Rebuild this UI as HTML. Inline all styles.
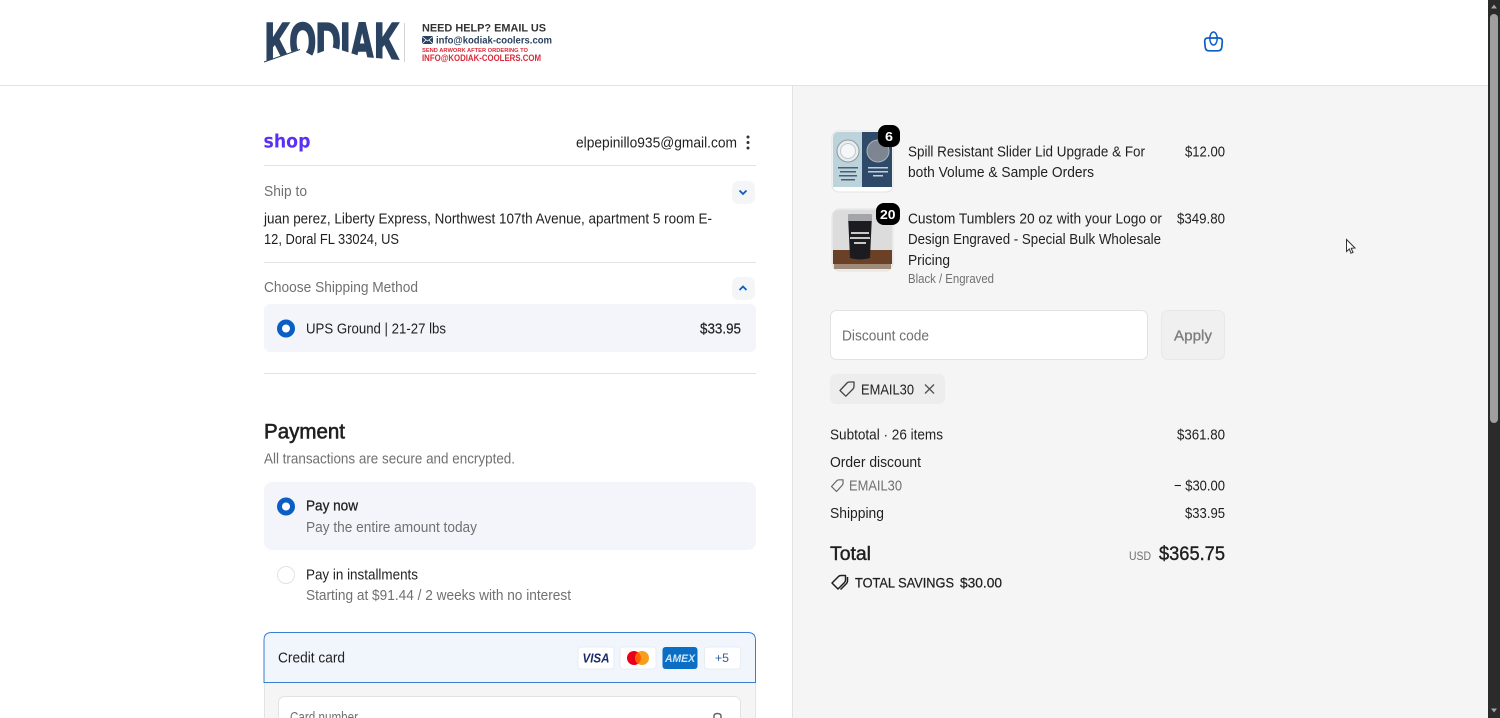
<!DOCTYPE html>
<html lang="en"><head><meta charset="utf-8"><title>Checkout</title>
<style>
html,body{margin:0;padding:0;width:1500px;height:718px;overflow:hidden;background:#fff}
svg{display:block}
text{font-family:"Liberation Sans",sans-serif;font-size:15px;fill:#1f1f1f}
.g{fill:#707070}
.b{font-weight:bold}
</style></head><body>
<svg width="1500" height="718" viewBox="0 0 1500 718" xmlns="http://www.w3.org/2000/svg">
<rect x="793" y="85" width="695" height="633" fill="#f5f5f5"/>
<rect x="0" y="85" width="1488" height="1" fill="#e3e3e3"/>
<rect x="792" y="85" width="1" height="633" fill="#e3e3e3"/>

<!-- logo -->
<text x="265" y="60" class="b" textLength="134" lengthAdjust="spacingAndGlyphs" style="font-size:53px;fill:#2b4361;stroke:#2b4361;stroke-width:2.500px">KODIAK</text>
<path d="M264 61.700 L300 49 L312 55.500 L333 47.500 L363 57 L400 60 L402 66 L262 66Z" fill="#fff"/>
<path d="M264 62 L300 49.500" stroke="#2b4361" stroke-width="1" fill="none"/>
<rect x="404" y="23" width="1" height="39" fill="#d5d5d5"/>
<text x="422" y="31.500" class="b" textLength="124" lengthAdjust="spacingAndGlyphs" style="font-size:11px;fill:#333">NEED HELP? EMAIL US</text>
<rect x="422" y="36" width="11" height="8" fill="#2b4361"/>
<path d="M422 36.500 L427.500 41 L433 36.500M422 44 L426 40M433 44 L429 40" stroke="#fff" stroke-width=".8" fill="none"/>
<text x="436" y="43.500" class="b" textLength="116" lengthAdjust="spacingAndGlyphs" style="font-size:10px;fill:#2b4361">info@kodiak-coolers.com</text>
<text x="422" y="52" class="b" textLength="106" lengthAdjust="spacingAndGlyphs" style="font-size:5.500px;fill:#d9293a">SEND ARWORK AFTER ORDERING TO</text>
<text x="422" y="61" class="b" textLength="119" lengthAdjust="spacingAndGlyphs" style="font-size:9px;fill:#d9293a">INFO@KODIAK-COOLERS.COM</text>

<!-- bag -->
<path d="M1208 38 H1219 Q1222.500 38 1222.300 41.500 L1221.800 47 Q1221.500 50.800 1218 50.800 H1209 Q1205.500 50.800 1205.200 47 L1204.700 41.500 Q1204.500 38 1208 38Z" fill="none" stroke="#0b5fc4" stroke-width="1.700"/>
<ellipse cx="1213.500" cy="38.500" rx="3.700" ry="6.500" fill="none" stroke="#0b5fc4" stroke-width="1.500"/>

<!-- shop -->
<text x="263.500" y="147.500" class="b" textLength="47" lengthAdjust="spacingAndGlyphs" style="font-family:'DejaVu Sans',sans-serif;font-size:19px;fill:#5a31f4">shop</text>
<text x="576" y="147.500" textLength="161" lengthAdjust="spacingAndGlyphs">elpepinillo935@gmail.com</text>
<circle cx="748" cy="137" r="1.500" fill="#333"/><circle cx="748" cy="142.500" r="1.500" fill="#333"/><circle cx="748" cy="148" r="1.500" fill="#333"/>
<rect x="264" y="165" width="492" height="1" fill="#e3e3e3"/>

<text x="264" y="196" class="g" textLength="43" lengthAdjust="spacingAndGlyphs">Ship to</text>
<rect x="732" y="181" width="23" height="23" rx="7" fill="#f3f5f7"/>
<path d="M739.500 190.500 L743 194 L746.500 190.500" fill="none" stroke="#0b5fc4" stroke-width="1.800"/>
<text x="264" y="223.500" textLength="448" lengthAdjust="spacingAndGlyphs">juan perez, Liberty Express, Northwest 107th Avenue, apartment 5 room E-</text>
<text x="264" y="244" textLength="135" lengthAdjust="spacingAndGlyphs">12, Doral FL 33024, US</text>
<rect x="264" y="262" width="492" height="1" fill="#e3e3e3"/>

<text x="264" y="292" class="g" textLength="154" lengthAdjust="spacingAndGlyphs">Choose Shipping Method</text>
<rect x="732" y="277" width="23" height="23" rx="7" fill="#f3f5f7"/>
<path d="M739.500 290 L743 286.500 L746.500 290" fill="none" stroke="#0b5fc4" stroke-width="1.800"/>
<rect x="264" y="304" width="492" height="48" rx="6" fill="#f4f5fb"/>
<circle cx="286" cy="328.500" r="6.500" fill="#fff" stroke="#0b5fc4" stroke-width="5"/>
<text x="306" y="333.500" textLength="140" lengthAdjust="spacingAndGlyphs">UPS Ground | 21-27 lbs</text>
<text x="700" y="333.500" textLength="41" lengthAdjust="spacingAndGlyphs" style="stroke:#1f1f1f;stroke-width:.2px">$33.95</text>
<rect x="264" y="373" width="492" height="1" fill="#e3e3e3"/>

<text x="264" y="438.500" textLength="81" lengthAdjust="spacingAndGlyphs" style="font-size:21px;stroke:#1f1f1f;stroke-width:.6px">Payment</text>
<text x="264" y="463.500" class="g" textLength="251" lengthAdjust="spacingAndGlyphs">All transactions are secure and encrypted.</text>

<rect x="264" y="482" width="492" height="68" rx="8" fill="#f4f5fb"/>
<circle cx="286" cy="506.500" r="6.500" fill="#fff" stroke="#0b5fc4" stroke-width="5"/>
<text x="306" y="510.500" textLength="52" lengthAdjust="spacingAndGlyphs" style="stroke:#1f1f1f;stroke-width:.3px">Pay now</text>
<text x="306" y="532" class="g" textLength="171" lengthAdjust="spacingAndGlyphs">Pay the entire amount today</text>

<circle cx="286" cy="575" r="8.500" fill="#fff" stroke="#e2e2e2"/>
<text x="306" y="579.500" textLength="112" lengthAdjust="spacingAndGlyphs">Pay in installments</text>
<text x="306" y="600" class="g" textLength="265" lengthAdjust="spacingAndGlyphs">Starting at $91.44 / 2 weeks with no interest</text>

<rect x="265" y="683" width="490" height="35" fill="#f5f5f5"/>
<path d="M264.500 718 V683" stroke="#e3e3e3" fill="none"/>
<path d="M755.500 718 V683" stroke="#e3e3e3" fill="none"/>
<path d="M264 682.500 V640 Q264 632.500 271.500 632.500 H748 Q755.500 632.500 755.500 640 V682.500 Z" fill="#f1f5fc" stroke="#0b5fc4" stroke-opacity=".8"/>
<text x="278" y="662.500" textLength="67" lengthAdjust="spacingAndGlyphs">Credit card</text>

<rect x="578" y="647" width="36" height="22" rx="3" fill="#fff" stroke="#e8ecf3"/>
<text x="582.500" y="662.500" class="b" textLength="27" lengthAdjust="spacingAndGlyphs" style="font-size:13px;fill:#1a2b6d;font-style:italic">VISA</text>
<rect x="620" y="647" width="36" height="22" rx="3" fill="#fff" stroke="#e8ecf3"/>
<circle cx="634" cy="658" r="7" fill="#eb001b"/><circle cx="642" cy="658" r="7" fill="#f79e1b"/>
<path d="M638 652.300 A7 7 0 0 1 638 663.700 A7 7 0 0 1 638 652.300Z" fill="#ff5f00"/>
<rect x="662.500" y="647" width="35" height="22" rx="3" fill="#0a6fc4"/>
<text x="665" y="662" class="b" textLength="30" lengthAdjust="spacingAndGlyphs" style="font-size:11px;fill:#cfe6f8;font-style:italic">AMEX</text>
<rect x="704.500" y="647" width="36" height="22" rx="3" fill="#fff" stroke="#e8ecf3"/>
<text x="715" y="662" textLength="14" lengthAdjust="spacingAndGlyphs" style="font-size:12px;fill:#33619c">+5</text>

<rect x="278.500" y="696.500" width="462" height="40" rx="6" fill="#fff" stroke="#e2e2e2"/>
<text x="290" y="722" class="g" textLength="68" lengthAdjust="spacingAndGlyphs">Card number</text>
<path d="M714 718 V716 Q714 713.500 717.500 713.500 Q721 713.500 721 716 V718" fill="none" stroke="#666" stroke-width="1.500"/>

<!-- product 1 -->
<rect x="832" y="131" width="61" height="61" rx="7" fill="#fff" stroke="#e3e3e3"/>
<path d="M833 138 Q833 132 839 132 H862 V187 H833Z" fill="#bcd3dc"/>
<path d="M862 132 H886 Q892 132 892 138 V187 H862Z" fill="#2f4a68"/>
<circle cx="848" cy="151" r="11" fill="#e8eef0" stroke="#8d9aa0"/>
<circle cx="848" cy="151" r="7.500" fill="#f4f6f7" stroke="#c0c8cc"/>
<circle cx="878" cy="151" r="11" fill="#7c8590" stroke="#aab2ba"/>
<rect x="838" y="167" width="20" height="1.500" fill="#4a5e70"/><rect x="840" y="171" width="16" height="1.500" fill="#4a5e70"/><rect x="839" y="175" width="18" height="1.500" fill="#4a5e70"/><rect x="841" y="179" width="14" height="1.500" fill="#4a5e70"/>
<rect x="868" y="167" width="20" height="1.500" fill="#c5d0da"/><rect x="868" y="171" width="20" height="1.500" fill="#c5d0da"/><rect x="873" y="175" width="10" height="1.500" fill="#c5d0da"/>
<rect x="878" y="125" width="22" height="22" rx="8" fill="#000"/>
<text x="885" y="141" class="b" textLength="8" lengthAdjust="spacingAndGlyphs" style="font-size:13px;fill:#fff">6</text>

<text x="908" y="156.500" textLength="237" lengthAdjust="spacingAndGlyphs">Spill Resistant Slider Lid Upgrade &amp; For</text>
<text x="908" y="177" textLength="186" lengthAdjust="spacingAndGlyphs">both Volume &amp; Sample Orders</text>
<text x="1185" y="156.500" textLength="40" lengthAdjust="spacingAndGlyphs">$12.00</text>

<!-- product 2 -->
<rect x="832" y="209" width="61" height="62" rx="8" fill="#ededed" stroke="#e3e3e3"/>
<path d="M833 216 Q833 210 840 210 H886 Q892 210 892 216 V250 H833Z" fill="#dcdcdc"/>
<path d="M833 250 H892 V264 H833Z" fill="#6a4026"/>
<rect x="834" y="264" width="57" height="5" fill="#a08a78"/>
<path d="M848 215 H872 L870 258 Q860 261 850 258Z" fill="#1c1c20"/>
<rect x="848" y="214" width="24" height="7" rx="1" fill="#a3a5a8"/>
<rect x="851" y="232" width="18" height="2" fill="#c8c8c8"/><rect x="850" y="237" width="20" height="2" fill="#c8c8c8"/><rect x="854" y="242" width="12" height="2" fill="#c8c8c8"/>
<rect x="876" y="203" width="24" height="22" rx="8" fill="#000"/>
<text x="880" y="219" class="b" textLength="15.500" lengthAdjust="spacingAndGlyphs" style="font-size:13px;fill:#fff">20</text>

<text x="908" y="223.500" textLength="254" lengthAdjust="spacingAndGlyphs">Custom Tumblers 20 oz with your Logo or</text>
<text x="908" y="244" textLength="253" lengthAdjust="spacingAndGlyphs">Design Engraved - Special Bulk Wholesale</text>
<text x="908" y="265" textLength="42" lengthAdjust="spacingAndGlyphs">Pricing</text>
<text x="908" y="283" class="g" textLength="86" lengthAdjust="spacingAndGlyphs" style="font-size:12.500px">Black / Engraved</text>
<text x="1177" y="223.500" textLength="48" lengthAdjust="spacingAndGlyphs">$349.80</text>

<!-- discount -->
<rect x="830.500" y="310.500" width="317" height="49" rx="6" fill="#fff" stroke="#e2e2e2"/>
<text x="842" y="340.500" class="g" textLength="87" lengthAdjust="spacingAndGlyphs">Discount code</text>
<rect x="1161.500" y="310.500" width="63" height="49" rx="6" fill="#f0f0f0" stroke="#e8e8e8"/>
<text x="1174" y="340.500" textLength="38" lengthAdjust="spacingAndGlyphs" style="fill:#7d7d7d;stroke:#7d7d7d;stroke-width:.35px">Apply</text>

<rect x="830" y="374" width="115" height="30" rx="6" fill="#ededed"/>
<path d="M840 390.500 L847 383 Q848 382 849.500 382 H854 V386.500 Q854 388 853 389 L845.800 396.200Z M851 384.800 h.1" fill="none" stroke="#444" stroke-width="1.300" stroke-linejoin="round"/>
<text x="861" y="394.500" textLength="53" lengthAdjust="spacingAndGlyphs">EMAIL30</text>
<path d="M925 384.500 L934 393.500 M934 384.500 L925 393.500" stroke="#555" stroke-width="1.400"/>

<text x="830" y="439.500" textLength="113" lengthAdjust="spacingAndGlyphs">Subtotal · 26 items</text>
<text x="1177" y="439.500" textLength="48" lengthAdjust="spacingAndGlyphs">$361.80</text>
<text x="830" y="467" textLength="91" lengthAdjust="spacingAndGlyphs">Order discount</text>
<path d="M831.500 486.500 L837 480.500 Q838 479.800 839 479.800 H843 V483.500 Q843 484.500 842 485.500 L836.500 491.500Z" fill="none" stroke="#666" stroke-width="1.200" stroke-linejoin="round"/>
<text x="849" y="490.500" class="g" textLength="53" lengthAdjust="spacingAndGlyphs">EMAIL30</text>
<text x="1174" y="490.500" textLength="51" lengthAdjust="spacingAndGlyphs">− $30.00</text>
<text x="830" y="518" textLength="54" lengthAdjust="spacingAndGlyphs">Shipping</text>
<text x="1185" y="518" textLength="40" lengthAdjust="spacingAndGlyphs">$33.95</text>

<text x="830" y="560" textLength="41" lengthAdjust="spacingAndGlyphs" style="font-size:19px;stroke:#1f1f1f;stroke-width:.4px">Total</text>
<text x="1129" y="560" class="g" textLength="22" lengthAdjust="spacingAndGlyphs" style="font-size:12px">USD</text>
<text x="1159" y="560" textLength="66" lengthAdjust="spacingAndGlyphs" style="font-size:19px;stroke:#1f1f1f;stroke-width:.4px">$365.75</text>

<path d="M832 583 L838.500 576.500 Q839.500 575.500 841 575.500 H845.500 V580 Q845.500 581.500 844.500 582.500 L838 589Z M847.500 577 V581 Q847.500 582.500 846.500 583.500 L840.500 589.500 M842.500 578.500 h.1" fill="none" stroke="#1f1f1f" stroke-width="1.500" stroke-linejoin="round"/>
<text x="855" y="587.500" textLength="99" lengthAdjust="spacingAndGlyphs" style="font-size:14px;stroke:#1f1f1f;stroke-width:.25px">TOTAL SAVINGS</text>
<text x="960" y="587.500" textLength="42" lengthAdjust="spacingAndGlyphs" style="font-size:14px;stroke:#1f1f1f;stroke-width:.25px">$30.00</text>

<!-- cursor -->
<path d="M1346.500 239.500 V251.500 L1349.300 249 L1351 253.200 L1353 252.400 L1351.200 248.300 L1355 248Z" fill="#fff" stroke="#333" stroke-width="1"/>

<!-- scrollbar -->
<rect x="1488" y="0" width="12" height="718" fill="#2b2b2b"/>
<rect x="1490" y="14" width="8" height="409" rx="4" fill="#9f9f9f"/>
<path d="M1491 8.500 L1494 4.500 L1497 8.500Z" fill="#a5a5a5"/>
<path d="M1491 708.500 L1494 712.500 L1497 708.500Z" fill="#a5a5a5"/>
</svg>
</body></html>
